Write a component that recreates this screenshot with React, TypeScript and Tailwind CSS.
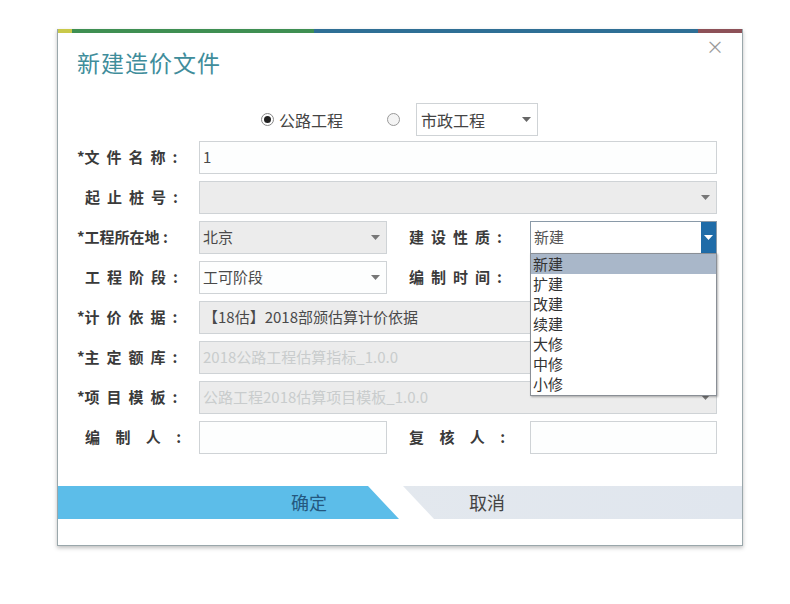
import React from 'react';

const font = { fontFamily: '"Noto Sans CJK SC", "Noto Sans", sans-serif' };

function Arrow({ className = "" }: { className?: string }) {
  return (
    <svg width="9" height="5" viewBox="0 0 9 5" className={className}>
      <path d="M0 0 L9 0 L4.5 5 Z" fill="currentColor" />
    </svg>
  );
}

function Label({ text, star = false, track = "tracking-[7px]", indent = "" }: { text: string; star?: boolean; track?: string; indent?: string }) {
  return (
    <div className={`w-[122px] shrink-0 text-[15px] font-bold text-[#3a3a3a] whitespace-pre ${indent}`}>
      {star && <span>*</span>}
      <span className={track}>{text}</span>
    </div>
  );
}

function Field({
  value = "",
  gray = false,
  faded = false,
  arrow = false,
  width = "w-[518px]",
}: {
  value?: string;
  gray?: boolean;
  faded?: boolean;
  arrow?: boolean;
  width?: string;
}) {
  return (
    <div
      className={`${width} h-[33px] border border-[#cfd3d6] flex items-center pl-[3px] pr-[6px] ${
        gray ? 'bg-[#ececec]' : 'bg-[#fdfefe]'
      }`}
    >
      <span
        className={`flex-1 text-[15px] truncate ${faded ? 'text-[#c9cccd]' : 'text-[#4a4a4a]'}`}
      >
        {value}
      </span>
      {arrow && <Arrow className="text-[#777]" />}
    </div>
  );
}

export default function App() {
  const options = ['新建', '扩建', '改建', '续建', '大修', '中修', '小修'];
  return (
    <div className="w-[790px] h-[604px] bg-white pt-[29px] pl-[57px]" style={font}>
      <div className="relative w-[686px] h-[517px] bg-white border-x border-b border-[#9aa7ab] shadow-[0_2px_4px_rgba(0,0,0,0.25)] flex flex-col">
        <div className="flex h-[4px] shrink-0">
          <div className="w-[14px] bg-[#c9c94a]" />
          <div className="w-[242px] bg-[#3f8f52]" />
          <div className="flex-1 bg-[#2f6f95]" />
          <div className="w-[44px] bg-[#8d5158]" />
        </div>
        <div className="absolute right-[18px] top-[8px] text-[18px] leading-none text-[#9a9a9a]">×</div>
        <div className="pl-[19px] pt-[12px] h-[70px] text-[23px] text-[#3f8d9b] tracking-[1px]">新建造价文件</div>

        <div className="flex items-center h-[33px] pl-[203px] text-[16px] text-[#444]">
          <span className="w-[13px] h-[13px] rounded-full border border-[#888] bg-white flex items-center justify-center">
            <span className="w-[7px] h-[7px] rounded-full bg-[#222]" />
          </span>
          <span className="ml-[5px]">公路工程</span>
          <span className="ml-[44px] w-[13px] h-[13px] rounded-full border border-[#999] bg-[#f4f4f4]" />
          <div className="ml-[16px] w-[122px] h-[33px] border border-[#cfd3d6] flex items-center pl-[4px] pr-[6px]">
            <span className="flex-1">市政工程</span>
            <Arrow className="text-[#666]" />
          </div>
        </div>

        <div className="flex flex-col gap-[7px] mt-[5px] pl-[19px]">
          <div className="flex items-center">
            <Label star text="文件名称:" />
            <Field value="1" />
          </div>
          <div className="flex items-center">
            <Label text="起止桩号:" indent="pl-[8px]" />
            <Field gray arrow />
          </div>
          <div className="flex items-center">
            <Label star text="工程所在地 :" track="tracking-[0px]" />
            <Field value="北京" gray arrow width="w-[188px]" />
            <div className="w-[143px] pl-[22px] text-[15px] font-bold text-[#3a3a3a] tracking-[7px]">建设性质:</div>
            <div className="relative">
              <div className="w-[187px] h-[33px] border border-[#8a9aa8] bg-white flex items-center pl-[3px]">
                <span className="flex-1 text-[15px] text-[#555]">新建</span>
                <div className="w-[15px] h-full bg-[#1f6ca8] flex items-center justify-center">
                  <Arrow className="text-white" />
                </div>
              </div>
              <div className="absolute left-0 top-[32px] z-10 w-[187px] h-[143px] border border-[#8a8f96] bg-white shadow-[1px_1px_2px_rgba(0,0,0,0.3)] flex flex-col">
                {options.map((o, i) => (
                  <div
                    key={o}
                    className={`h-[20px] leading-[20px] pl-[2px] text-[15px] text-[#333] overflow-hidden ${
                      i === 0 ? 'bg-[#a9b7c9]' : ''
                    }`}
                  >
                    {o}
                  </div>
                ))}
              </div>
            </div>
          </div>
          <div className="flex items-center">
            <Label text="工程阶段:" indent="pl-[8px]" />
            <Field value="工可阶段" arrow width="w-[188px]" />
            <div className="w-[143px] pl-[22px] text-[15px] font-bold text-[#3a3a3a] tracking-[7px]">编制时间:</div>
          </div>
          <div className="flex items-center">
            <Label star text="计价依据:" />
            <Field value="【18估】2018部颁估算计价依据" gray arrow />
          </div>
          <div className="flex items-center">
            <Label star text="主定额库:" />
            <Field value="2018公路工程估算指标_1.0.0" gray faded arrow />
          </div>
          <div className="flex items-center">
            <Label star text="项目模板:" />
            <Field value="公路工程2018估算项目模板_1.0.0" gray faded arrow />
          </div>
          <div className="flex items-center">
            <Label text="编 制 人 :" track="tracking-[6px]" indent="pl-[8px]" />
            <Field width="w-[188px]" />
            <div className="w-[143px] pl-[22px] text-[15px] font-bold text-[#3a3a3a] whitespace-pre tracking-[6px]">复 核 人 :</div>
            <Field width="w-[187px]" />
          </div>
        </div>

        <div className="flex mt-[32px] h-[33px] gap-[4px]">
          <div className="w-[341px] bg-[#5cbde9] flex items-center text-[18px] text-[#24587f] [clip-path:polygon(0_0,310px_0,100%_100%,0_100%)]">
            <span className="ml-[233px]">确定</span>
          </div>
          <div className="flex-1 bg-gradient-to-r from-[#e3e8ee] to-[#e0e6ee] flex items-center text-[18px] text-[#444] [clip-path:polygon(0_0,100%_0,100%_100%,31px_100%)]">
            <span className="ml-[66px]">取消</span>
          </div>
        </div>
      </div>
    </div>
  );
}
